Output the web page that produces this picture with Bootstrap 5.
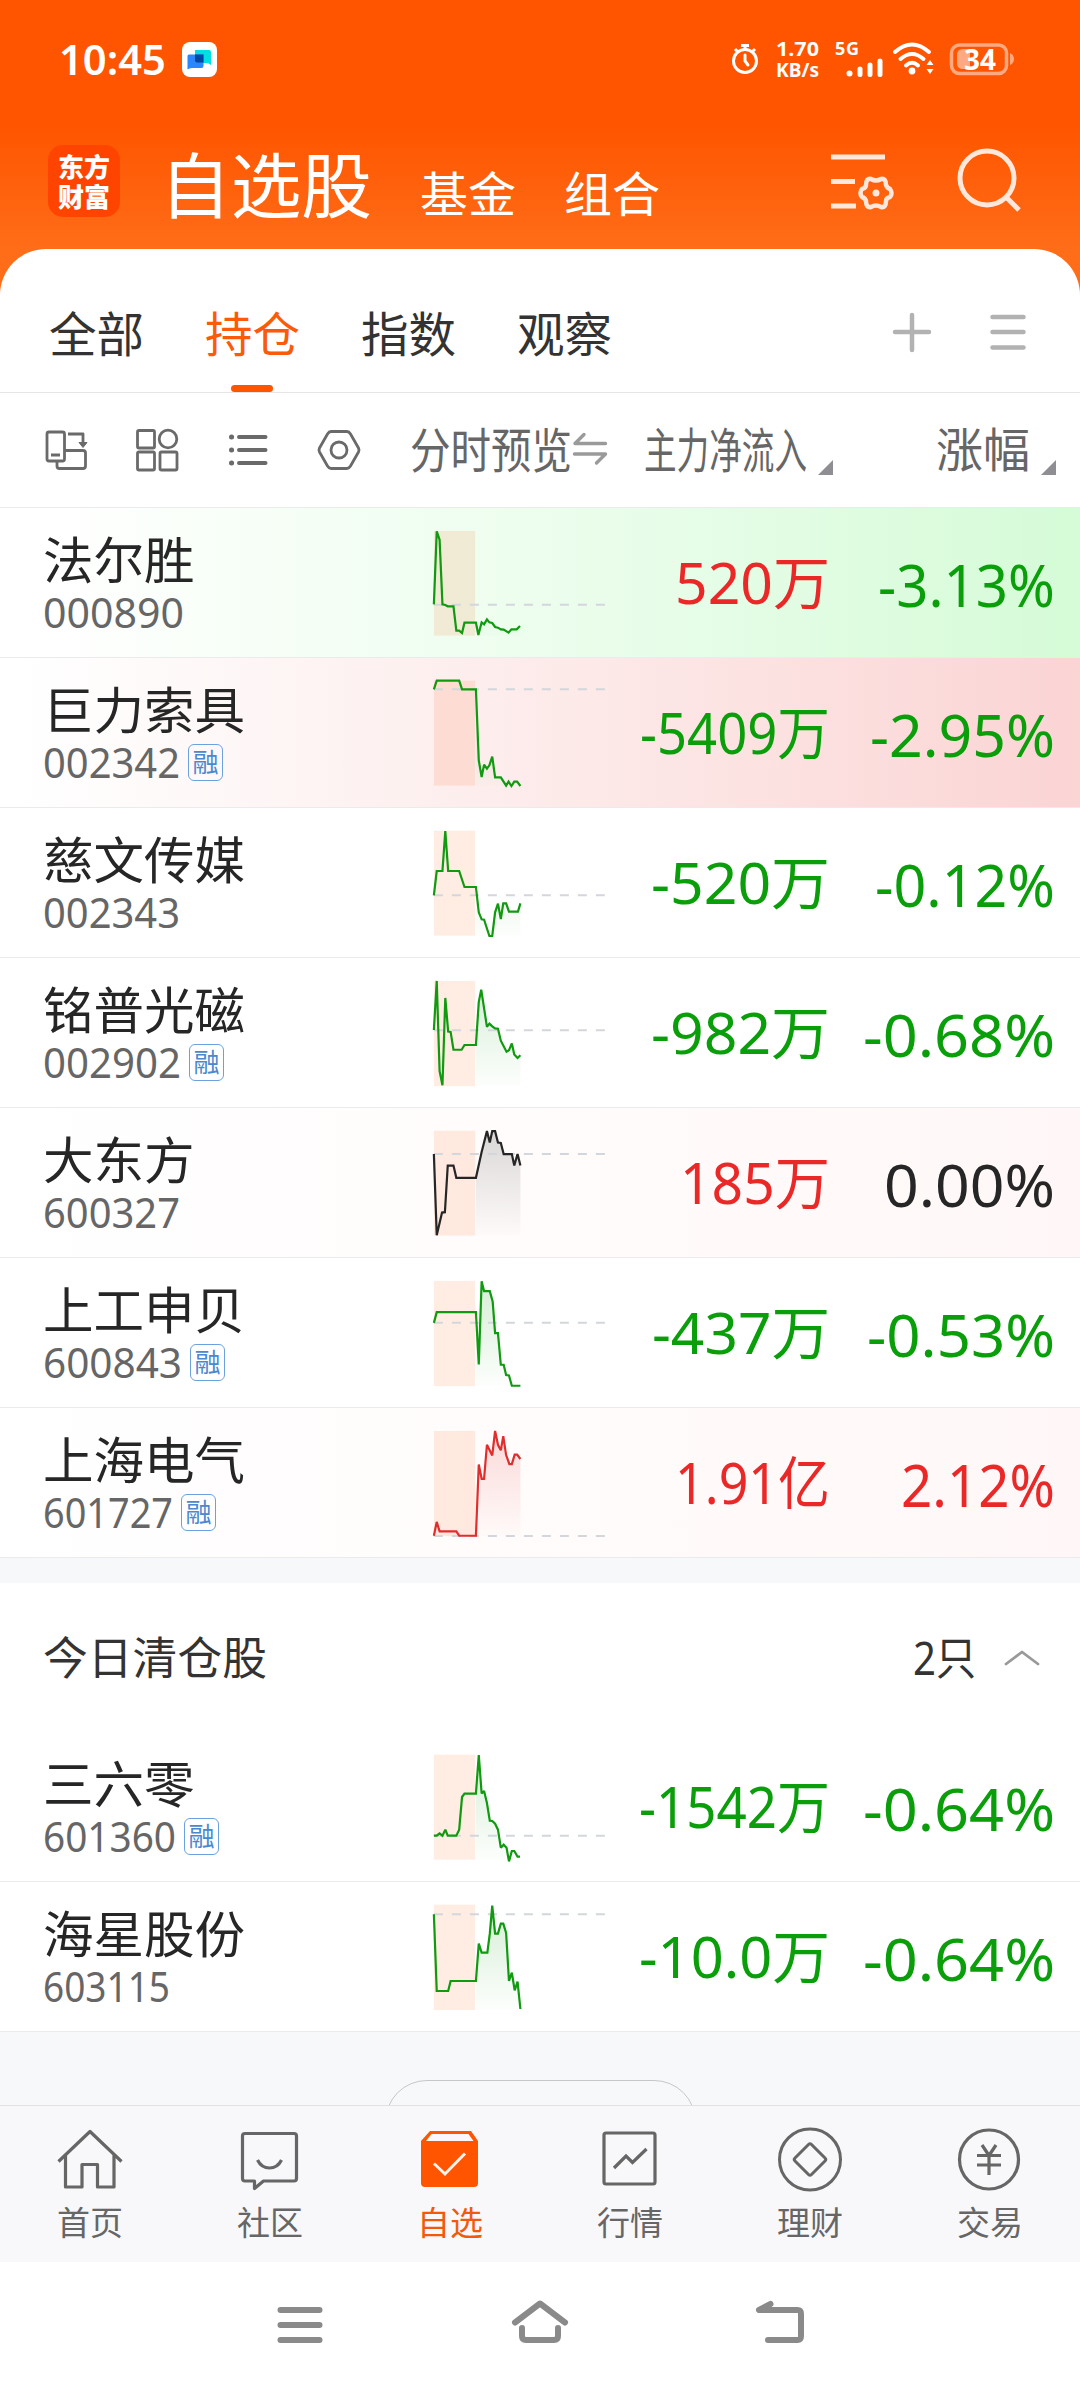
<!DOCTYPE html>
<html lang="zh-CN">
<head>
<meta charset="utf-8">
<meta name="viewport" content="width=device-width, initial-scale=1">
<title>自选股</title>
<link href="https://cdn.jsdelivr.net/npm/bootstrap@5.3.0/dist/css/bootstrap.min.css" rel="stylesheet">
<style>
  body { width: 1080px; height: 2388px; overflow: hidden; background: #fff; color: #262626; line-height: 1;
    font-family: "Noto Sans", "Noto Sans CJK SC", sans-serif; }
  svg { display: block; flex: none; overflow: visible; }
  .fit { display: inline-block; white-space: nowrap; transform-origin: 0 50%; }
  .top-zone { height: 296px; background: linear-gradient(#ff5500 0, #ff5500 125px, #ff6d18 250px); color: #fff; }
  .status-line { height: 118px; padding: 0 64px 0 59px; }
  .clock { font-size: 42px; font-weight: 600; width: 107px; }
  .speed { font-size: 20px; font-weight: 700; line-height: 21px; width: 44px; }
  .title-line { height: 131px; padding-left: 48px; }
  .logo { width: 72px; height: 72px; margin-top: 27px; border-radius: 15px; background: #ff4400; font-family: "Noto Sans CJK SC", sans-serif;
    font-weight: 900; font-size: 26px; line-height: 30px; padding-top: 6px; text-align: center; }
  .titles { margin: 31px 0 0 40px; gap: 48px; }
  .title-main { font-size: 71px; }
  .title-sub { font-size: 48px; }
  .title-icons { margin: 27px 60px 0 0; }
  .sheet { margin-top: -47px; background: #fff; border-radius: 46px 46px 0 0; }
  .tab-line { height: 144px; padding-left: 49px; border-bottom: 1px solid #e6e6e6; gap: 60px; font-size: 47.5px; color: #333; }
  .tab-line .tab-item { height: 143px; width: 96px; padding-top: 61px; }
  .tab-item.on { color: #fa5a0a; }
  .tab-item.on::after { content: ""; position: absolute; left: 26px; bottom: 0; width: 42px; height: 7px; border-radius: 4px; background: #ff5500; }
  .tab-icons { margin: 59px 51px 0 0; }
  .tools { height: 115px; border-bottom: 1px solid #ebebeb; color: #666; font-size: 48px; }
  .tool-icons { margin: 32px 0 0 42px; }
  .col-label { margin-top: 33px; }
  .col-chart { margin-left: 46px; }
  .col-swap { margin-top: 39px; }
  .col-flow { margin-left: 36px; }
  .col-rate { margin-left: 103px; width: 94px; font-size: 47px; }
  .corner { width: 15px; height: 15px; margin: 67px 0 0 11px; background: #8e8e93; clip-path: polygon(100% 0, 100% 100%, 0 100%); }
  .stock { height: 150px; border-bottom: 1px solid #ebebeb; padding-right: 25px; }
  .hot-green { background: linear-gradient(90deg, #fff 4%, #e8fde9 60%, #d5fbd7); }
  .hot-red { background: linear-gradient(90deg, #fff 2%, #fce7e6 60%, #fbd4d4); }
  .hot-faint { background: linear-gradient(90deg, #fff, #fffbfa 60%, #fff7f7); }
  .who { width: 430px; padding: 24px 0 0 43px; }
  .stock-name { font-size: 50.5px; line-height: 56px; }
  .code-line { height: 37px; margin-top: 6px; gap: 8px; }
  .code { font-size: 41px; line-height: 37px; color: #666; }
  .rong { width: 35px; height: 37px; border: 1.5px solid #6ba2de; border-radius: 6px; color: #4a88cf; font-size: 26px; line-height: 34px; text-align: center; }
  .flow { width: 220px; padding-top: 42px; font-size: 57px; line-height: 64px; }
  .rate { width: 225px; padding-top: 45px; font-size: 58px; line-height: 64px; }
  .up { color: #eb2828; } .down { color: #0a9f0a; } .flat { color: #262626; }
  .spacer { height: 25px; background: #f7f8fa; }
  .cleared { height: 149px; padding: 0 40px 0 43px; font-size: 45px; color: #333; }
  .chev { margin-left: 28px; }
  .more-zone { height: 73px; background: #f7f8fa; overflow: hidden; }
  .pill { width: 311px; height: 84px; margin-top: 48px; border: 1.5px solid #c6c7c9; border-radius: 42px; }
  .dock { height: 157px; background: #f8f8fa; border-top: 1px solid #e0e0e2; color: #666; font-size: 33px; }
  .dock .dock-item { width: 180px; padding-top: 19px; }
  .dock .dock-item span { margin-top: 7px; line-height: 42px; }
  .dock .on { color: #f25a0a; }
  .sys { height: 126px; }
</style>
</head>
<body>
<header class="top-zone">
  <div class="status-line d-flex align-items-center">
    <span class="fit clock" data-w="107">10:45</span>
    <svg class="ms-3" width="35" height="35" viewBox="0 0 35 35"><rect width="35" height="35" rx="8" fill="#fff"/><path d="M13 8h14q2 0 2 2v13q-2-2-5-2H13z" fill="#00dfe4"/><path d="M5.500 14q0-1.500 1.500-1.500H21.500V24q0 2-2 2H10q-3 0-4.500 1.500z" fill="#2987ff"/><path d="M13 12.500h8.500v8H15q-2 0-2-2z" fill="#0048a0"/></svg>
    <div class="d-flex align-items-center ms-auto">
      <svg width="28" height="32" viewBox="0 0 28 32" fill="none" stroke="#fff" stroke-width="3"><circle cx="14" cy="18" r="11.500"/><path d="M10 2.500h8M14 3v4M4 6l3 3M24 6l-3 3" /><path d="M14 12v6l3 4" stroke-linecap="round"/></svg>
      <div class="speed d-flex flex-column align-items-center ms-3"><span class="fit" data-w="43">1.70</span><span class="fit" data-w="43">KB/s</span></div>
      <svg class="ms-3" width="49" height="36" viewBox="0 0 49 36"><text x="0" y="14" font-size="18" font-weight="700" fill="#fff" textLength="24">5G</text><circle cx="14.500" cy="32.500" r="3" fill="#fff"/><path d="M25 28v5.500M35 24v9.500M45 20v13.500" stroke="#fff" stroke-width="5" stroke-linecap="round"/></svg>
      <svg width="42" height="34" viewBox="0 0 42 34" class="ms-2" fill="none" stroke="#fff" stroke-width="4" stroke-linecap="round"><path d="M3 10Q20 -5 37 10M8.500 17Q20 7 31.500 17M14 23.500Q20 18 26 23.500"/><circle cx="20" cy="29" r="3.400" fill="#fff" stroke="none"/><path d="M38 18l3.500 5h-7zM38 32l3.500-5h-7z" fill="#fff" stroke="none"/></svg>
      <svg class="ms-3" width="66" height="32" viewBox="0 0 66 32"><rect x="1.500" y="2" width="55" height="28.500" rx="8" fill="none" stroke="#ffa981" stroke-width="3.500"/><path d="M13 6h7v20h-7q-6 0-6-6v-8q0-6 6-6z" fill="#ffa981"/><path d="M60 10q4 2 4 6t-4 6z" fill="#ffa981"/><text x="14" y="26.500" font-size="28" font-weight="700" fill="#fff" textLength="32" lengthAdjust="spacingAndGlyphs">34</text></svg>
    </div>
  </div>
  <div class="title-line d-flex">
    <div class="logo">东方<br>财富</div>
    <div class="titles d-flex align-items-baseline">
      <span class="fit title-main" data-w="212">自选股</span>
      <span class="title-sub">基金</span>
      <span class="title-sub">组合</span>
    </div>
    <svg class="title-icons ms-auto" width="192" height="72" viewBox="828 145 192 72" fill="none" stroke="#ffe8db" stroke-width="5">
      <path d="M831 157h54M831 181.500h24M831 206h25"/>
      <g transform="translate(876 193)"><path stroke-linejoin="round" d="M-5-14q5 3 10 0q5-1 5 6q1 3 4 4q3 4 0 8q-4 1-4 4q0 7-5 6q-5-3-10 0q-5 1-5-6q-1-3-4-4q-3-4 0-8q4-1 4-4q0-7 5-6z" stroke-width="4.500"/><circle r="3.500" fill="#ffe8db" stroke="none"/></g>
      <circle cx="987" cy="178" r="27" /><path d="M1006 197l13 13"/>
    </svg>
  </div>
</header>
<main class="sheet position-relative">
  <nav class="tab-line d-flex">
    <div class="tab-item">全部</div><div class="tab-item on position-relative">持仓</div><div class="tab-item">指数</div><div class="tab-item">观察</div>
    <svg class="tab-icons ms-auto" width="140" height="48" viewBox="889 308 140 48" stroke="#b2b2b2" stroke-width="4.500" stroke-linecap="round"><path d="M895 332h34M912 315v35M992.500 317h31M992.500 332h31M992.500 347.500h31"/></svg>
  </nav>
  <div class="tools d-flex">
    <svg class="tool-icons" width="322" height="50" viewBox="42 425 322 50" fill="none" stroke="#6a6a6a" stroke-width="2.800" stroke-linejoin="round">
      <rect x="47" y="432" width="17.500" height="29" rx="2"/><path d="M51 455h9M57 461v5q0 2.500 2.500 2.500H83q2.500 0 2.500-2.500V453q0-2.500-2.500-2.500H65M68 434h15v10"/><path d="M79 442.500h8l-4 5z" fill="#6a6a6a" stroke-width="1"/>
      <rect x="137.500" y="430.500" width="17" height="17.500" rx="1.500"/><circle cx="168" cy="439" r="8.800"/><rect x="137.500" y="452" width="17" height="18" rx="1.500"/><rect x="160" y="452" width="17" height="18" rx="1.500"/>
      <path d="M239 437h26.500M239 450h26.500M239 463h26.500" stroke-width="4" stroke-linecap="round"/><path d="M231.500 437h.1M231.500 450h.1M231.500 463h.1" stroke-width="5" stroke-linecap="round"/>
      <path d="M331 431.500h16q2 0 3.500 2.500l8 14q1 2 0 4l-8 14q-1.500 2.500-3.500 2.500h-16q-2 0-3.500-2.500l-8-14q-1-2 0-4l8-14q1.500-2.500 3.500-2.500z"/><circle cx="339" cy="450" r="8"/>
    </svg>
    <span class="fit col-label col-chart" data-w="162">分时预览</span>
    <svg class="col-swap" width="36" height="34" viewBox="571 432 36 34" fill="none" stroke="#9a9a9a" stroke-width="3.400" stroke-linecap="round" stroke-linejoin="round"><path d="M604.500 443.500H574l9-9M573.500 454h31l-9 9"/></svg>
    <span class="fit col-label col-flow" data-w="163">主力净流入</span>
    <i class="corner"></i>
    <span class="col-label col-rate">涨幅</span>
    <i class="corner"></i>
  </div>
  <section id="held"></section>
  <div class="spacer"></div>
  <div class="cleared d-flex align-items-center">
    <span class="fit" data-w="224">今日清仓股</span>
    <span class="fit ms-auto" data-w="63">2只</span>
    <svg class="chev" width="36" height="18" viewBox="0 0 36 18" fill="none" stroke="#999" stroke-width="2.800" stroke-linecap="round" stroke-linejoin="round"><path d="M2 15L18 3L34 15"/></svg>
  </div>
  <section id="sold"></section>
  <div class="more-zone d-flex justify-content-center"><div class="pill"></div></div>
</main>
<nav class="dock d-flex">
  <div class="dock-item d-flex flex-column align-items-center"><svg width="70" height="70" viewBox="55 2125 70 70" fill="none" stroke="#666" stroke-width="3.200" stroke-linejoin="round"><path d="M58.500 2161.500L90 2131.500L121.500 2161.500M65.500 2155V2187H82V2164.500H97.500V2187H114V2155"/></svg><span>首页</span></div>
  <div class="dock-item d-flex flex-column align-items-center"><svg width="70" height="70" viewBox="235 2125 70 70" fill="none" stroke="#666" stroke-width="3.200" stroke-linejoin="round"><path d="M245 2133.500H294Q296.500 2133.500 296.500 2136V2178.500Q296.500 2181 294 2181H263.500L254.500 2188.500V2181H245Q242.500 2181 242.500 2178.500V2136Q242.500 2133.500 245 2133.500z"/><path d="M257.500 2160q4 8 12 8t12-8"/></svg><span>社区</span></div>
  <div class="dock-item on d-flex flex-column align-items-center"><svg width="70" height="70" viewBox="415 2125 70 70" fill="none"><path d="M430 2131h41l7 10v42q0 4-4 4h-49q-4 0-4-4v-42z" fill="#ff5500"/><path d="M431.500 2134h37l5 7h-47.500z" fill="#f8f8fa"/><path d="M434 2163.500l11 10.500l20-20.500" stroke="#fff3ec" stroke-width="3"/></svg><span>自选</span></div>
  <div class="dock-item d-flex flex-column align-items-center"><svg width="70" height="70" viewBox="595 2125 70 70" fill="none" stroke="#666" stroke-width="3.200" stroke-linejoin="round"><rect x="604" y="2133" width="51" height="51" rx="2"/><path d="M614 2168l12-12l6.500 6.500l14-13.500" stroke-linejoin="miter"/></svg><span>行情</span></div>
  <div class="dock-item d-flex flex-column align-items-center"><svg width="70" height="70" viewBox="775 2125 70 70" fill="none" stroke="#666" stroke-width="3" stroke-linejoin="round"><circle cx="810" cy="2159.500" r="30.500"/><path d="M811.500 2144.500l13.500 13.500q1.500 1.500 0 3l-13.500 13.500q-1.500 1.500-3 0l-13.500-13.500q-1.500-1.500 0-3l13.500-13.500q1.500-1.500 3 0z"/></svg><span>理财</span></div>
  <div class="dock-item d-flex flex-column align-items-center"><svg width="70" height="70" viewBox="955 2125 70 70" fill="none" stroke="#666" stroke-width="3.200"><circle cx="989" cy="2159.500" r="29.500"/><path d="M982 2145l7 10.500l7-10.500M977 2155.500h24M977 2165h24M989 2155v20"/></svg><span>交易</span></div>
</nav>
<footer class="sys d-flex">
  <svg width="1080" height="126" viewBox="0 2262 1080 126" fill="none" stroke="#8a8a8a" stroke-width="6" stroke-linecap="round" stroke-linejoin="round"><path d="M280.500 2310h39M280.500 2325h39M280.500 2340h39M515 2322.500L540 2303.500L565 2322.500M522 2328v8q0 4 4 4h28q4 0 4-4v-8M770.500 2304L759 2310H797.500q3.500 0 3.500 4v22q0 4-3.500 4H768"/></svg>
</footer>
<script src="https://cdn.jsdelivr.net/npm/bootstrap@5.3.0/dist/js/bootstrap.bundle.min.js"></script>
<script>
// box: top and height of the chart's value space; band: top and bottom of the call-auction band; base: previous close
const held = [
 {name:'法尔胜',code:'000890',cw:141,flow:'520万',fw:155,fc:'up',rate:'-3.13%',rw:177,c:'down',bg:'hot-green',box:[23,447],band:[92,406],base:313,
  pts:'1063,312 1070,93 1077,118 1084,312 1091,314 1097,318 1111,318 1118,391 1125,391 1132,398 1138,367 1166,367 1172,404 1180,366 1186,372 1193,357 1199,366 1206,368 1213,380 1220,382 1227,387 1234,388 1246,397 1253,387 1266,387 1274,377'},
 {name:'巨力索具',code:'002342',cw:137,r:1,flow:'-5409万',fw:190,fc:'down',rate:'-2.95%',rw:185,c:'down',bg:'hot-red',box:[473,447],band:[541,856],base:567,
  pts:'1063,567 1070,541 1125,541 1132,567 1166,567 1173,780 1180,830 1186,793 1193,805 1199,795 1206,769 1213,831 1227,831 1240,856 1246,844 1253,857 1260,844 1267,844 1275,857'},
 {name:'慈文传媒',code:'002343',cw:137,flow:'-520万',fw:179,fc:'down',rate:'-0.12%',rw:180,c:'down',box:[923,447],band:[991,1306],base:1185,
  pts:'1063,1185 1070,1112 1084,1112 1091,992 1098,1112 1125,1112 1138,1160 1166,1160 1173,1236 1180,1257 1186,1258 1199,1307 1206,1307 1213,1236 1220,1210 1227,1256 1233,1209 1240,1209 1247,1234 1269,1234 1275,1209'},
 {name:'铭普光磁',code:'002902',cw:138,r:1,flow:'-982万',fw:179,fc:'down',rate:'-0.68%',rw:192,c:'down',box:[19,376.8],band:[77,343],base:202,
  pts:'1063,201 1070,77 1077,305 1084,341 1091,120 1098,205 1104,206 1111,251 1131,251 1138,239 1166,239 1173,130 1179,99 1193,193 1199,185 1206,192 1213,197 1220,198 1227,228 1241,256 1247,252 1254,235 1260,263 1268,272 1275,265'},
 {name:'大东方',code:'600327',cw:137,flow:'185万',fw:150,fc:'up',rate:'0.00%',rw:171,c:'flat',bg:'hot-faint',box:[398.5,376.8],band:[456,721],base:515,
  pts:'1063,515 1070,720 1083,663 1090,662 1097,544 1111,544 1118,575 1166,575 1180,510 1193,457 1200,486 1206,457 1213,457 1220,486 1227,487 1234,515 1254,515 1260,544 1268,515 1275,544'},
 {name:'上工申贝',code:'600843',cw:139,r:1,flow:'-437万',fw:178,fc:'down',rate:'-0.53%',rw:188,c:'down',box:[778,376.8],band:[836,1102],base:942,
  pts:'1063,942 1070,915 1166,915 1173,1047 1180,837 1186,862 1200,862 1207,888 1213,968 1220,968 1227,1048 1234,1048 1240,1074 1247,1075 1254,1101 1275,1101'},
 {name:'上海电气',code:'601727',cw:130,r:1,flow:'1.91亿',fw:155,fc:'up',rate:'2.12%',rw:154,c:'up',bg:'hot-faint',box:[1157,376.8],band:[1215,1481],base:1481,
  pts:'1063,1480 1070,1445 1077,1469 1118,1469 1125,1480 1166,1480 1173,1300 1180,1336 1186,1336 1193,1250 1206,1277 1213,1215 1220,1250 1227,1264 1233,1228 1240,1276 1248,1299 1254,1299 1261,1275 1267,1275 1275,1286'}
];
const sold = [
 {name:'三六零',code:'601360',cw:133,r:1,flow:'-1542万',fw:191,fc:'down',rate:'-0.64%',rw:192,c:'down',box:[515,447],band:[583,898],base:826,
  pts:'1063,826 1070,826 1077,819 1084,826 1091,808 1097,826 1118,826 1125,808 1132,710 1138,700 1166,700 1173,584 1180,699 1186,692 1193,728 1200,781 1206,782 1213,790 1220,808 1227,862 1234,853 1241,862 1247,903 1254,872 1260,872 1268,889 1274,889'},
 {name:'海星股份',code:'603115',cw:127,flow:'-10.0万',fw:191,fc:'down',rate:'-0.64%',rw:192,c:'down',box:[965,447],band:[1033,1349],base:1062,
  pts:'1063,1062 1070,1292 1098,1292 1104,1262 1166,1262 1173,1150 1180,1177 1194,1177 1200,1120 1206,1036 1213,1120 1220,1120 1227,1090 1233,1090 1240,1118 1247,1262 1254,1237 1261,1290 1268,1264 1275,1346'}
];
const ink = {up:'#e02d2d', down:'#0f9a0f', flat:'#262626'};
function chart(s) {
  const [t, b] = s.band, id = 'g' + s.code;
  const after = s.pts.split(' ').filter(p => parseFloat(p) >= 1166).join(' ');
  return `<svg width="180" height="149" viewBox="1053.5 ${s.box[0]} 441 ${s.box[1]}" preserveAspectRatio="none" fill="none">
   <defs><linearGradient id="${id}" gradientUnits="userSpaceOnUse" x1="0" y1="${t}" x2="0" y2="${b}"><stop offset="0" stop-color="${ink[s.c]}" stop-opacity=".17"/><stop offset="1" stop-color="${ink[s.c]}" stop-opacity=".01"/></linearGradient></defs>
   <rect x="1063" y="${t}" width="101" height="${b - t}" fill="#ff5500" fill-opacity=".11"/>
   <polygon points="1166,${b} ${after} 1275,${b}" fill="url(#${id})"/>
   <path d="M1063 ${s.base}H1482" stroke="#d3d6db" stroke-width="2" stroke-dasharray="9 9" vector-effect="non-scaling-stroke"/>
   <polyline points="${s.pts}" stroke="${ink[s.c]}" stroke-width="2.200" stroke-linejoin="miter" stroke-miterlimit="2" vector-effect="non-scaling-stroke"/></svg>`;
}
const row = s => `<div class="stock d-flex ${s.bg || ''}">
  <div class="who"><div class="stock-name">${s.name}</div>
   <div class="code-line d-flex"><span class="code fit" data-w="${s.cw}">${s.code}</span>${s.r ? '<span class="rong">融</span>' : ''}</div></div>
  ${chart(s)}
  <div class="flow text-end ${s.fc}"><span class="fit" data-w="${s.fw}">${s.flow}</span></div>
  <div class="rate text-end ${s.c}"><span class="fit" data-w="${s.rw}">${s.rate}</span></div></div>`;
document.getElementById('held').innerHTML = held.map(row).join('');
document.getElementById('sold').innerHTML = sold.map(row).join('');
document.querySelectorAll('.fit').forEach(el => {
  const label = document.createElement('span');
  label.className = 'fit';
  label.textContent = el.textContent;
  el.replaceChildren(label);
  const want = +el.dataset.w, own = label.getBoundingClientRect().width;
  el.style.width = want + 'px';
  label.style.transform = `scaleX(${(want / own).toFixed(4)})`;
  el.classList.remove('fit');
  el.classList.add('d-inline-block', 'text-start', 'text-nowrap');
});
</script>
</body>
</html>
